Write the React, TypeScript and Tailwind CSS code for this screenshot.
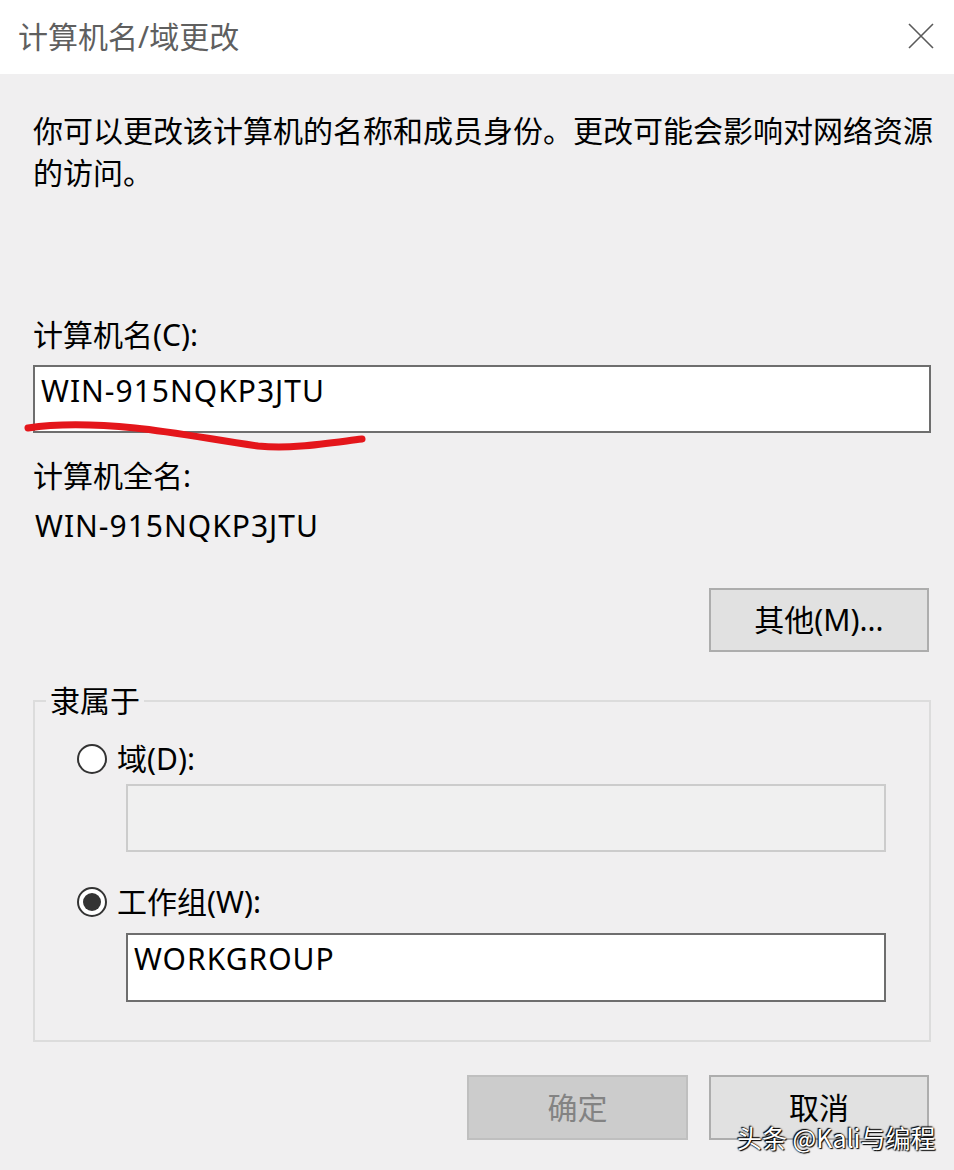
import React from "react";

const FONT = { fontFamily: '"Noto Sans", "Noto Sans CJK SC", sans-serif' };

function Radio({ checked }: { checked?: boolean }) {
  return (
    <span className="flex h-[30px] w-[30px] shrink-0 items-center justify-center rounded-full border-2 border-[#333333] bg-white">
      {checked && <span className="h-[18px] w-[18px] rounded-full bg-[#333333]" />}
    </span>
  );
}

export default function App() {
  return (
    <div
      style={FONT}
      className="relative flex h-[1170px] w-[954px] flex-col overflow-hidden bg-[#f0eff0] text-black"
    >
      {/* Title bar */}
      <div className="flex h-[74px] shrink-0 items-center justify-between bg-white pl-[18px] pr-[20px]">
        <span className="text-[30px] leading-[40px] text-[#5f5f5f]">计算机名/域更改</span>
        <svg width="26" height="26" viewBox="0 0 26 26" className="mt-[-2px]">
          <path d="M1 1 L25 25 M25 1 L1 25" stroke="#5a5a5a" strokeWidth="1.6" fill="none" />
        </svg>
      </div>

      {/* Body */}
      <div className="flex flex-col pl-[33px] pr-[23px] pt-[36px]">
        <p className="mr-[-14px] text-[30px] leading-[42px]">
          你可以更改该计算机的名称和成员身份。更改可能会影响对网络资源的访问。
        </p>

        <div className="mt-[120px] text-[30px] leading-[42px]">计算机名(C):</div>
        <div className="relative mt-[9px] h-[68px] border-2 border-[#6e6e6e] bg-white pl-[6px] pt-[3px] text-[30px] leading-[42px] tracking-[1px]">
          WIN-915NQKP3JTU
        </div>

        <div className="mt-[22px] text-[30px] leading-[42px]">计算机全名:</div>
        <div className="mt-[8px] pl-[2px] text-[30px] leading-[42px] tracking-[1px]">WIN-915NQKP3JTU</div>

        <div className="mt-[41px] flex justify-end pr-[2px]">
          <button className="h-[64px] w-[220px] border-2 border-[#adadad] bg-[#e1e1e1] text-[30px] leading-[42px]">
            其他(M)...
          </button>
        </div>

        <fieldset className="mt-[34px] border-2 border-[#dcdcdc] pb-[38px] pl-[42px] pr-[43px] pt-[22px]">
          <legend className="ml-[-31px] px-[4px] text-[30px] leading-[30px]">隶属于</legend>
          <div className="flex h-[42px] items-center gap-[10px] text-[30px] leading-[42px]">
            <Radio />
            <span>域(D):</span>
          </div>
          <div className="ml-[49px] mt-[4px] h-[68px] border-2 border-[#cccccc] bg-[#f0f0f0]" />
          <div className="mt-[29px] flex h-[42px] items-center gap-[10px] text-[30px] leading-[42px]">
            <Radio checked />
            <span>工作组(W):</span>
          </div>
          <div className="ml-[49px] mt-[10px] h-[69px] border-2 border-[#6e6e6e] bg-white pl-[6px] pt-[3px] text-[30px] leading-[42px] tracking-[1px]">
            WORKGROUP
          </div>
        </fieldset>

        <div className="mt-[33px] flex justify-end gap-[21px] pr-[2px]">
          <button className="h-[65px] w-[221px] border-2 border-[#bfbfbf] bg-[#cccccc] text-[30px] leading-[42px] text-[#838383]">
            确定
          </button>
          <button className="h-[65px] w-[220px] border-2 border-[#adadad] bg-[#e1e1e1] text-[30px] leading-[42px]">
            取消
          </button>
        </div>
      </div>

      {/* Red annotation stroke */}
      <svg
        className="pointer-events-none absolute left-0 top-0"
        width="954"
        height="1170"
        viewBox="0 0 954 1170"
      >
        <path
          d="M28 428 C 60 423, 95 424, 135 428 C 175 432, 215 440, 258 446 C 292 449, 322 444, 362 439"
          stroke="#e4161b"
          strokeWidth="7"
          strokeLinecap="round"
          fill="none"
        />
      </svg>

      {/* Watermark */}
      <div
        className="absolute left-[737px] top-[1120px] text-[25px] leading-[34px] text-white"
        style={{
          fontFamily: '"Noto Sans CJK SC", sans-serif',
          textShadow: "0 0 2px #000, 1px 1px 1px #000, -1px -1px 1px #000",
        }}
      >
        头条 @Kali与编程
      </div>
    </div>
  );
}
